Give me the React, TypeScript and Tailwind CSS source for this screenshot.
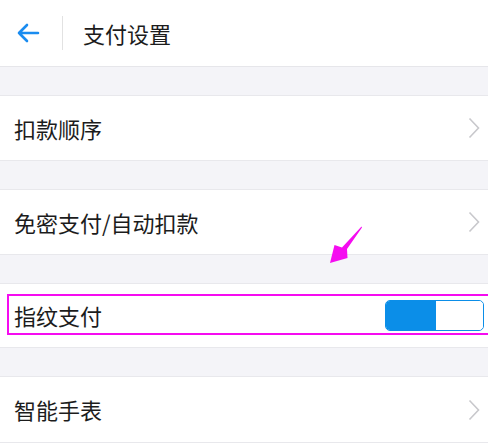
import React from "react";

function Chevron() {
  return (
    <svg width="12" height="22" viewBox="0 0 12 22" className="mr-[4px]">
      <path d="M1.5 1.5 L10.5 11 L1.5 20.5" fill="none" stroke="#c8c8cc" strokeWidth="1.6" />
    </svg>
  );
}

function Row({ label, h, children }: { label: string; h: string; children?: React.ReactNode }) {
  return (
    <div className={`relative flex items-center justify-between bg-white pl-[14px] pr-[4px] border-y border-[#e8e8ec] ${h}`}>
      <span className="text-[22px] text-[#1c1c1c]">{label}</span>
      {children ?? <Chevron />}
    </div>
  );
}

export default function App() {
  return (
    <div
      className="w-[488px] h-[443px] overflow-hidden bg-[#f4f4f8]"
      style={{ fontFamily: '"Noto Sans CJK SC", "Noto Sans", sans-serif' }}
    >
      {/* header */}
      <div className="flex items-center h-[67px] bg-white border-b border-[#e6e6ea]">
        <svg width="24" height="20" viewBox="0 0 24 20" className="ml-[16px]">
          <path d="M22 10 H3 M11 2 L3 10 L11 18" fill="none" stroke="#1a8cf0" strokeWidth="2.6" strokeLinecap="round" strokeLinejoin="round" />
        </svg>
        <div className="ml-[22px] w-px h-[34px] bg-[#e2e2e2]" />
        <span className="ml-[20px] text-[22px] text-[#1c1c1c]">支付设置</span>
      </div>

      <div className="h-[28px]" />
      <Row label="扣款顺序" h="h-[66px]" />
      <div className="h-[28px]" />
      <Row label="免密支付/自动扣款" h="h-[66px]" />
      <div className="h-[28px]" />
      <Row label="指纹支付" h="h-[65px]">
        <div className="flex w-[99px] h-[31px] rounded-[5px] border border-[#0b8ee8] overflow-hidden">
          <div className="w-[50px] bg-[#0b8ee8]" />
          <div className="flex-1 bg-white rounded-[4px]" />
        </div>
        <div className="absolute left-[7px] top-[10px] w-[490px] h-[41px] border-[2.5px] border-[#f50cf0]" />
      </Row>
      <div className="h-[28px]" />
      <Row label="智能手表" h="h-[67px]" />

      {/* annotation arrow */}
      <svg className="absolute left-[320px] top-[220px]" width="50" height="50" viewBox="0 0 50 50">
        <path d="M41.5 6.5 L42 7.5 L27 29 L27.5 38 L10 43 L14.5 25 L22 27.5 Z" fill="#f50cf0" />
      </svg>
    </div>
  );
}
